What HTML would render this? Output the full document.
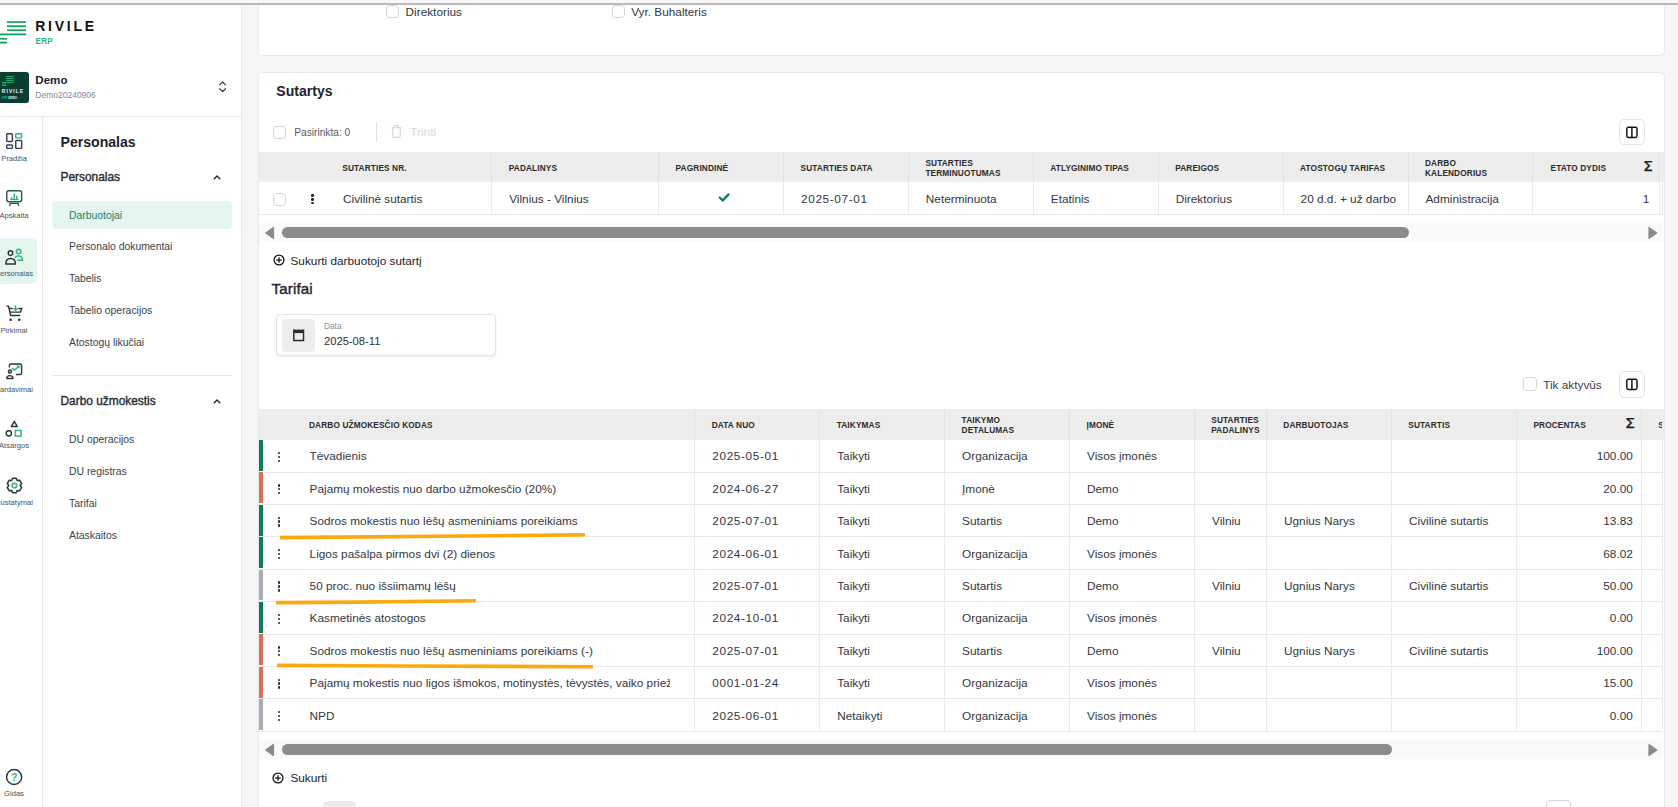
<!DOCTYPE html>
<html lang="lt">
<head>
<meta charset="utf-8">
<title>Rivile ERP</title>
<style>
*{box-sizing:border-box;margin:0;padding:0}
html,body{width:1678px;height:807px;overflow:hidden}
body{position:relative;background:#f5f5f7;font-family:"Liberation Sans",sans-serif;color:#2f333c;font-size:11.8px}
.abs{position:absolute}
#topstrip{left:0;top:0;width:1678px;height:3px;background:#f7f7f7;z-index:50}
#topline{left:0;top:3px;width:1678px;height:2px;background:#bababa;z-index:50}
#side{left:0;top:0;width:241px;height:807px;background:#fff}
#sideborder{left:241px;top:5px;width:1px;height:802px;background:#e7e7ea}
#railborder{left:42px;top:116px;width:1px;height:691px;background:#e5e6e9}
#hdiv{left:0;top:116px;width:241px;height:1px;background:#e5e6e9}
.rv{font-weight:700;color:#111;font-size:14px;letter-spacing:2.75px;left:35.2px;top:18.4px;line-height:16px}
.erp{font-weight:700;color:#3db27c;font-size:8.2px;left:35.6px;top:36.6px;line-height:10px;letter-spacing:.2px}
.railitem{left:0;width:28px;text-align:center;font-size:7.6px;color:#4a5160;white-space:nowrap;line-height:9px}
.railitem span{position:absolute;left:50%;transform:translateX(-50%)}
.mi{left:69px;font-size:10.4px;color:#3a3f4a;line-height:12px;white-space:nowrap}
.sec{left:60.5px;font-size:11.9px;font-weight:400;-webkit-text-stroke:.4px #2a2e38;color:#2a2e38;line-height:13px;white-space:nowrap}
.card{background:#fff;border:1px solid #e9e9ec;border-radius:5px}
.th{position:absolute;font-size:8.27px;font-weight:700;letter-spacing:.13px;color:#2b2b2b;line-height:10px;white-space:nowrap}
.td{position:absolute;white-space:nowrap;line-height:14px;font-size:11.8px;color:#333742}
.vl{position:absolute;width:1px;background:#ebebeb}
.hl{position:absolute;height:1px;background:#e8e8e8}
.cb{position:absolute;width:13.4px;height:13.4px;border:1px solid #d4d4d7;border-radius:3.5px;background:#fff}
.dots{position:absolute;width:4px}
.dots i{display:block;width:2.4px;height:2.4px;border-radius:1.2px;background:#262626;margin:0 0 1.5px .8px}
.d{letter-spacing:.63px}
.sig{font-family:"DejaVu Sans","Liberation Sans",sans-serif;font-size:13.6px;line-height:16px;color:#1a1a1a;transform:scaleX(1.17);transform-origin:0 0;-webkit-text-stroke:.25px #1a1a1a}
</style>
</head>
<body>
<!-- SIDEBAR -->
<div id="side" class="abs"></div>
<div id="sideborder" class="abs"></div>
<div id="railborder" class="abs"></div>
<div id="hdiv" class="abs"></div>

<!-- logo -->
<svg class="abs" style="left:0;top:18px" width="30" height="28" viewBox="0 0 30 28">
 <g fill="#12a05c">
  <rect x="7" y="3.2" width="19" height="1.7"/>
  <rect x="7" y="7.3" width="19" height="1.7"/>
  <rect x="7" y="11.4" width="19" height="1.7"/>
  <rect x="0" y="15.5" width="26" height="1.8"/>
  <rect x="0" y="19.9" width="7" height="1.7"/>
  <rect x="0" y="23.7" width="7" height="1.8"/>
 </g>
</svg>
<div class="abs rv">RIVILE</div>
<div class="abs erp">ERP</div>

<!-- company -->
<div class="abs" style="left:-4px;top:72px;width:33px;height:31px;background:#0b3d33;border-radius:3px;box-shadow:0 0 2px rgba(0,0,0,.15)"></div>
<svg class="abs" style="left:0;top:72px" width="29" height="31" viewBox="0 0 29 31">
 <g fill="#16a567">
  <rect x="6" y="4" width="7.8" height="1.1"/>
  <rect x="6" y="6" width="7.8" height="1.1"/>
  <rect x="6" y="8" width="7.8" height="1.1"/>
  <rect x="2" y="10" width="11.8" height="1.1"/>
  <rect x="2" y="11.6" width="4" height="1"/>
  <rect x="2" y="13" width="4" height="1"/>
 </g>
 <text x="1.8" y="21" font-family="Liberation Sans, sans-serif" font-weight="700" font-size="5" letter-spacing="1.05" fill="#f2f4f3">RIVILE</text>
 <text x="1.8" y="26.7" font-family="Liberation Sans, sans-serif" font-weight="700" font-size="2.9" fill="#1fb574">ERP<tspan fill="#e8efec" dx=".4">DEMO</tspan></text>
</svg>
<div class="abs" style="left:35.3px;top:72.5px;font-size:11.6px;font-weight:700;color:#1e2230;line-height:14px">Demo</div>
<div class="abs" style="left:35.3px;top:90px;font-size:8.5px;color:#7d8aa0;line-height:10px">Demo20240906</div>
<svg class="abs" style="left:218px;top:80px" width="10" height="14" viewBox="0 0 10 14" fill="none" stroke="#3a3a3e" stroke-width="1.3">
 <path d="M1.4 5.1 L4.6 2.1 L7.8 5.1"/><path d="M1.4 8.5 L4.6 11.5 L7.8 8.5"/>
</svg>

<!-- rail -->
<div class="abs" style="left:-4px;top:238px;width:41px;height:46px;background:#e5f6ef;border-radius:5px"></div>

<!-- Pradzia -->
<svg class="abs" style="left:5.9px;top:132.8px" width="17" height="17" viewBox="0 0 17 17" fill="none" stroke-width="1.45">
 <rect x=".75" y=".75" width="5.6" height="7.8" rx=".7" stroke="#3c4150"/>
 <rect x="9.75" y=".75" width="5.9" height="4.1" rx=".7" stroke="#2eb67d"/>
 <rect x=".75" y="11.95" width="5.6" height="3.4" rx=".7" stroke="#3c4150"/>
 <rect x="9.75" y="7.55" width="5.9" height="7.8" rx=".7" stroke="#3c4150"/>
</svg>
<div class="abs railitem" style="top:153.6px"><span>Pradžia</span></div>

<!-- Apskaita -->
<svg class="abs" style="left:5.9px;top:189.8px" width="17" height="17" viewBox="0 0 17 17" fill="none" stroke-width="1.45">
 <rect x=".75" y=".75" width="14.9" height="10.9" rx="2.2" stroke="#2f5a50"/>
 <path d="M3.5 13.4 H12.9 M4.6 13.4 L3.5 16 M11.8 13.4 L12.9 16" stroke="#2f5a50" stroke-width="1.3"/>
 <path d="M5.8 9.3 V7.2 M8.3 9.3 V3.4 M10.8 9.3 V5.8" stroke="#2eb67d" stroke-width="1.5"/>
 <path d="M4 9.5 H12.6" stroke="#2eb67d" stroke-width="1.2"/>
</svg>
<div class="abs railitem" style="top:211px"><span>Apskaita</span></div>

<!-- Personalas -->
<svg class="abs" style="left:5px;top:247.5px" width="19" height="18" viewBox="0 0 19 18" fill="none" stroke-width="1.45">
 <circle cx="13.6" cy="3.4" r="2.25" stroke="#2eb67d"/>
 <path d="M9.8 9.7 C10.6 8.6 11.9 7.9 13.5 7.9 C16 7.9 17.4 9.6 17.4 12.3 H12.2" stroke="#2eb67d"/>
 <circle cx="5.5" cy="5.1" r="2.3" stroke="#2f3440"/>
 <path d="M.8 16 C.8 12.6 2.7 10.4 5.6 10.4 C8.5 10.4 10.4 12.6 10.4 16 Z" stroke="#2f3440" stroke-linejoin="round"/>
</svg>
<div class="abs railitem" style="top:269px"><span>Personalas</span></div>

<!-- Pirkimai -->
<svg class="abs" style="left:6px;top:304.5px" width="17" height="17" viewBox="0 0 17 17" fill="none" stroke-width="1.45">
 <path d="M.3 1.1 H2.5 L4.7 10.5 H14.2" stroke="#2f3440"/>
 <path d="M3.2 3.5 H6.6 M12.3 3.5 H15.7 L14.5 7.1 H4" stroke="#2f3440"/>
 <circle cx="4.7" cy="14.8" r="1.3" fill="#2f3440" stroke="none"/>
 <circle cx="13.2" cy="14.8" r="1.3" fill="#2f3440" stroke="none"/>
 <path d="M9.5 .2 V5 M7.4 3.2 L9.5 5.3 L11.6 3.2" stroke="#2eb67d" stroke-width="1.5"/>
</svg>
<div class="abs railitem" style="top:325.5px"><span>Pirkimai</span></div>

<!-- Pardavimai -->
<svg class="abs" style="left:6px;top:362.5px" width="17" height="17" viewBox="0 0 17 17" fill="none" stroke-width="1.45">
 <path d="M3.4 4.4 V2.5 C3.4 1.6 4.1.9 5 .9 H14 C14.9.9 15.6 1.6 15.6 2.5 V9.9 C15.6 10.8 14.9 11.5 14 11.5 H10" stroke="#2f3440"/>
 <circle cx="3.9" cy="8.4" r="1.5" stroke="#2f3440"/>
 <path d="M.8 15.4 C.8 13.6 2 12.6 3.9 12.6 C5.8 12.6 7 13.6 7 15.4 Z" stroke="#2f3440" stroke-linejoin="round"/>
 <path d="M6 5 L8.3 7.3 L12.2 3.9" stroke="#2eb67d" stroke-width="1.5"/>
 <path d="M10.2 2.6 H13.6 V6 Z" fill="#2eb67d" stroke="none"/>
</svg>
<div class="abs railitem" style="top:384.5px"><span>Pardavimai</span></div>

<!-- Atsargos -->
<svg class="abs" style="left:5px;top:419.5px" width="18" height="18" viewBox="0 0 18 18" fill="none" stroke-width="1.45">
 <path d="M9.3 1.4 L12.2 6.4 H6.4 Z" stroke="#2f3440" stroke-linejoin="round"/>
 <circle cx="3.8" cy="13.3" r="2.65" stroke="#2f3440"/>
 <rect x="10.3" y="10.5" width="5.8" height="5.6" stroke="#2eb67d"/>
</svg>
<div class="abs railitem" style="top:441px"><span>Atsargos</span></div>

<!-- Nustatymai -->
<svg class="abs" style="left:5.5px;top:477.4px" width="17" height="17" viewBox="0 0 17 17" fill="none" stroke-width="1.5">
 <path d="M6.66 1.32 L10.24 1.32 L11.30 3.56 L13.77 3.36 L15.56 6.46 L14.15 8.50 L15.56 10.54 L13.77 13.64 L11.30 13.44 L10.24 15.68 L6.66 15.68 L5.60 13.44 L3.13 13.64 L1.34 10.54 L2.75 8.50 L1.34 6.46 L3.13 3.36 L5.60 3.56 Z" stroke="#2f3440" stroke-linejoin="round"/>
 <circle cx="8.45" cy="8.5" r="2.3" stroke="#2eb67d" stroke-width="1.6"/>
</svg>
<div class="abs railitem" style="top:498.2px"><span>Nustatymai</span></div>

<!-- Gidas -->
<svg class="abs" style="left:5px;top:768px" width="18" height="18" viewBox="0 0 18 18" fill="none">
 <circle cx="9.1" cy="9" r="7.55" stroke="#2f3440" stroke-width="1.5"/>
 <text x="9.2" y="12.7" text-anchor="middle" font-family="Liberation Sans, sans-serif" font-weight="700" font-size="10.4" fill="#2eb67d">?</text>
</svg>
<div class="abs railitem" style="top:788.5px"><span>Gidas</span></div>

<!-- side panel -->
<div class="abs" style="left:60.5px;top:134.2px;font-size:14.1px;font-weight:700;color:#1e222d;line-height:17px">Personalas</div>
<div class="abs sec" style="top:170.6px">Personalas</div>
<svg class="abs" style="left:212px;top:172px" width="10" height="10" viewBox="0 0 10 10" fill="none" stroke="#2b2b2b" stroke-width="1.4"><path d="M1.9 7.2 L5.1 4 L8.3 7.2"/></svg>
<div class="abs" style="left:52px;top:201px;width:180px;height:28px;background:#e4f6ef;border-radius:4px"></div>
<div class="abs mi" style="top:210.3px;color:#1d7a68">Darbuotojai</div>
<div class="abs mi" style="top:241.3px">Personalo dokumentai</div>
<div class="abs mi" style="top:273.3px">Tabelis</div>
<div class="abs mi" style="top:305.3px">Tabelio operacijos</div>
<div class="abs mi" style="top:337.3px">Atostogų likučiai</div>
<div class="abs" style="left:52px;top:375px;width:180px;height:1px;background:#e5e6e9"></div>
<div class="abs sec" style="top:394.6px">Darbo užmokestis</div>
<svg class="abs" style="left:212px;top:396px" width="10" height="10" viewBox="0 0 10 10" fill="none" stroke="#2b2b2b" stroke-width="1.4"><path d="M1.9 7.2 L5.1 4 L8.3 7.2"/></svg>
<div class="abs mi" style="top:433.8px">DU operacijos</div>
<div class="abs mi" style="top:465.8px">DU registras</div>
<div class="abs mi" style="top:497.8px">Tarifai</div>
<div class="abs mi" style="top:529.8px">Ataskaitos</div>

<!-- MAIN -->
<div id="main">
<div class="abs card" style="left:258px;top:-10px;width:1407px;height:66px"></div>
<div class="abs card" style="left:258px;top:72px;width:1407px;height:760px"></div>
<div class="cb" style="left:386px;top:5px;width:12.6px;height:12.6px"></div>
<div class="td" style="left:405.6px;top:4.6px">Direktorius</div>
<div class="cb" style="left:612px;top:5px;width:12.6px;height:12.6px"></div>
<div class="td" style="left:631.2px;top:4.6px">Vyr. Buhalteris</div>
<div class="abs" style="left:276.3px;top:82.7px;font-size:14.1px;font-weight:700;color:#1e222d;line-height:17px">Sutartys</div>
<div class="cb" style="left:273px;top:126px"></div>
<div class="abs" style="left:294.2px;top:127px;font-size:10.2px;color:#565c68;line-height:12px">Pasirinkta: 0</div>
<div class="abs" style="left:376px;top:122px;width:1px;height:20px;background:#e1e3e8"></div>
<svg class="abs" style="left:391px;top:125px" width="11" height="13" viewBox="0 0 11 13" fill="none" stroke="#d2d5dc" stroke-width="1.1"><path d="M.6 2.8 H10.4 M3.6 2.6 V1.3 C3.6 .9 3.9 .6 4.3 .6 H6.7 C7.1 .6 7.4 .9 7.4 1.3 V2.6 M1.8 3 V11 C1.8 11.8 2.4 12.4 3.2 12.4 H7.8 C8.6 12.4 9.2 11.8 9.2 11 V3"/></svg>
<div class="abs" style="left:410.3px;top:124.5px;font-size:11.8px;color:#d6d8e0;line-height:14px">Trinti</div>
<div class="abs" style="left:1619.1px;top:119.1px;width:25.7px;height:25.7px;border:1px solid #dde4f0;border-radius:5px;background:#fff"></div>
<svg class="abs" style="left:1625.6999999999998px;top:125.85px" width="13" height="13" viewBox="0 0 13 13" fill="none" stroke="#111" stroke-width="1.45"><rect x=".8" y="1.2" width="10.2" height="10.2" rx="1.6"/><path d="M5.9 1.2 V11.4"/></svg>
<div class="abs" style="left:259px;top:152px;width:1405px;height:30px;background:#ededed"></div>
<div class="vl" style="left:491.3px;top:152px;height:30px;background:#e2e2e2"></div>
<div class="vl" style="left:491.3px;top:182px;height:32px"></div>
<div class="vl" style="left:658.3px;top:152px;height:30px;background:#e2e2e2"></div>
<div class="vl" style="left:658.3px;top:182px;height:32px"></div>
<div class="vl" style="left:783.2px;top:152px;height:30px;background:#e2e2e2"></div>
<div class="vl" style="left:783.2px;top:182px;height:32px"></div>
<div class="vl" style="left:908px;top:152px;height:30px;background:#e2e2e2"></div>
<div class="vl" style="left:908px;top:182px;height:32px"></div>
<div class="vl" style="left:1032.8px;top:152px;height:30px;background:#e2e2e2"></div>
<div class="vl" style="left:1032.8px;top:182px;height:32px"></div>
<div class="vl" style="left:1157.7px;top:152px;height:30px;background:#e2e2e2"></div>
<div class="vl" style="left:1157.7px;top:182px;height:32px"></div>
<div class="vl" style="left:1282.6px;top:152px;height:30px;background:#e2e2e2"></div>
<div class="vl" style="left:1282.6px;top:182px;height:32px"></div>
<div class="vl" style="left:1407.5px;top:152px;height:30px;background:#e2e2e2"></div>
<div class="vl" style="left:1407.5px;top:182px;height:32px"></div>
<div class="vl" style="left:1532.4px;top:152px;height:30px;background:#e2e2e2"></div>
<div class="vl" style="left:1532.4px;top:182px;height:32px"></div>
<div class="vl" style="left:1658.6px;top:152px;height:30px;background:#e2e2e2"></div>
<div class="vl" style="left:1658.6px;top:182px;height:32px"></div>
<div class="vl" style="left:1662px;top:182px;height:32px"></div>
<div class="hl" style="left:259px;top:213.6px;width:1404px"></div>
<div class="th" style="left:342.3px;top:164.1px">SUTARTIES NR.</div>
<div class="th" style="left:508.8px;top:164.1px">PADALINYS</div>
<div class="th" style="left:675.6px;top:164.1px">PAGRINDINĖ</div>
<div class="th" style="left:800.5px;top:164.1px">SUTARTIES DATA</div>
<div class="th" style="left:925.4px;top:159.3px">SUTARTIES<br>TERMINUOTUMAS</div>
<div class="th" style="left:1050.3px;top:164.1px">ATLYGINIMO TIPAS</div>
<div class="th" style="left:1175.2px;top:164.1px">PAREIGOS</div>
<div class="th" style="left:1300.1px;top:164.1px">ATOSTOGŲ TARIFAS</div>
<div class="th" style="left:1425px;top:159.3px">DARBO<br>KALENDORIUS</div>
<div class="th" style="left:1550.5px;top:164.1px">ETATO DYDIS</div>
<div class="abs sig" style="left:1643.2px;top:158.2px">Σ</div>
<div class="cb" style="left:273px;top:192.5px"></div>
<div class="dots" style="left:310.7px;top:194.3px"><i></i><i></i><i></i></div>
<div class="td" style="left:343px;top:192.2px">Civilinė sutartis</div>
<div class="td" style="left:509.2px;top:192.2px">Vilnius - Vilnius</div>
<div class="td" style="left:801px;top:192.2px"><span class="d">2025-07-01</span></div>
<div class="td" style="left:925.8px;top:192.2px">Neterminuota</div>
<div class="td" style="left:1050.8px;top:192.2px">Etatinis</div>
<div class="td" style="left:1175.7px;top:192.2px">Direktorius</div>
<div class="td" style="left:1300.6px;top:192.2px">20 d.d. + už darbo</div>
<div class="td" style="left:1425.5px;top:192.2px">Administracija</div>
<div class="td" style="left:1600px;width:49.4px;text-align:right;top:192.2px">1</div>
<svg class="abs" style="left:717.5px;top:191.9px" width="13" height="10" viewBox="0 0 13 10" fill="none" stroke="#0d7d5b" stroke-width="2.3"><path d="M1 5 L4.7 8.4 L11.1 1.9"/></svg>
<div class="abs" style="left:259px;top:222.8px;width:1404px;height:19px;background:#fafafa"></div>
<div class="abs" style="left:281.9px;top:226.90px;width:1127.1px;height:11px;border-radius:5.5px;background:#8b8b8b"></div>
<svg class="abs" style="left:264.9px;top:226.95px" width="10" height="13" viewBox="0 0 10 13"><path d="M8.5 .6 V11.5 L.7 6.05 Z" fill="#8b8b8b" stroke="#8b8b8b" stroke-width="1.2" stroke-linejoin="round"/></svg>
<svg class="abs" style="left:1647.8px;top:226.95px" width="10" height="13" viewBox="0 0 10 13"><path d="M1 .6 V11.5 L8.8 6.05 Z" fill="#8b8b8b" stroke="#8b8b8b" stroke-width="1.2" stroke-linejoin="round"/></svg>
<svg class="abs" style="left:272.5px;top:254.4px" width="12" height="12" viewBox="0 0 12 12" fill="none" stroke="#111" stroke-width="1.25"><circle cx="6" cy="6" r="4.95"/><path d="M6 3.3 V8.7 M3.3 6 H8.7" stroke-width="1.25"/></svg>
<div class="td" style="left:290.5px;top:253.70px;color:#22252c">Sukurti darbuotojo sutartį</div>
<div class="abs" style="left:271.6px;top:280.2px;font-size:15.2px;font-weight:400;-webkit-text-stroke:.38px #23262e;color:#23262e;line-height:17px;letter-spacing:.1px">Tarifai</div>
<div class="abs" style="left:276px;top:314px;width:220px;height:41.5px;border:1px solid #e4e4e6;border-radius:4px;background:#fff;box-shadow:0 1px 2px rgba(0,0,0,.08)"></div>
<div class="abs" style="left:282px;top:319px;width:33px;height:33px;border-radius:4px;background:#ededed"></div>
<svg class="abs" style="left:292.8px;top:328.8px" width="12" height="13" viewBox="0 0 12 13" fill="none" stroke="#2e2e2e"><rect x=".8" y="1.3" width="9.7" height="10.2" stroke-width="1.5"/><path d="M.8 2.5 H10.5" stroke-width="3.2"/><path d="M3.9 .2 V1.1 M7.4 .2 V1.1" stroke="#ededed" stroke-width=".7"/></svg>
<div class="abs" style="left:324px;top:321.2px;font-size:8.3px;color:#8b909b;line-height:10px">Data</div>
<div class="abs" style="left:324px;top:333.6px;font-size:11.2px;color:#2c3038;line-height:14px">2025-08-11</div>
<div class="cb" style="left:1523.4px;top:377.2px;width:13.4px;height:13.4px"></div>
<div class="td" style="left:1543.2px;top:378px;color:#3a3f4a">Tik aktyvūs</div>
<div class="abs" style="left:1619.1px;top:371.1px;width:25.7px;height:26.8px;border:1px solid #dde4f0;border-radius:5px;background:#fff"></div>
<svg class="abs" style="left:1625.6999999999998px;top:378.40px" width="13" height="13" viewBox="0 0 13 13" fill="none" stroke="#111" stroke-width="1.45"><rect x=".8" y="1.2" width="10.2" height="10.2" rx="1.6"/><path d="M5.9 1.2 V11.4"/></svg>
<div class="abs" style="left:259px;top:409.3px;width:1405px;height:30.399999999999977px;background:#ededed"></div>
<div class="vl" style="left:694.4px;top:409.3px;height:30.399999999999977px;background:#e2e2e2"></div>
<div class="vl" style="left:694.4px;top:439.7px;height:291.59999999999997px"></div>
<div class="vl" style="left:819.3px;top:409.3px;height:30.399999999999977px;background:#e2e2e2"></div>
<div class="vl" style="left:819.3px;top:439.7px;height:291.59999999999997px"></div>
<div class="vl" style="left:944.2px;top:409.3px;height:30.399999999999977px;background:#e2e2e2"></div>
<div class="vl" style="left:944.2px;top:439.7px;height:291.59999999999997px"></div>
<div class="vl" style="left:1069.1px;top:409.3px;height:30.399999999999977px;background:#e2e2e2"></div>
<div class="vl" style="left:1069.1px;top:439.7px;height:291.59999999999997px"></div>
<div class="vl" style="left:1194.1px;top:409.3px;height:30.399999999999977px;background:#e2e2e2"></div>
<div class="vl" style="left:1194.1px;top:439.7px;height:291.59999999999997px"></div>
<div class="vl" style="left:1266px;top:409.3px;height:30.399999999999977px;background:#e2e2e2"></div>
<div class="vl" style="left:1266px;top:439.7px;height:291.59999999999997px"></div>
<div class="vl" style="left:1391px;top:409.3px;height:30.399999999999977px;background:#e2e2e2"></div>
<div class="vl" style="left:1391px;top:439.7px;height:291.59999999999997px"></div>
<div class="vl" style="left:1516px;top:409.3px;height:30.399999999999977px;background:#e2e2e2"></div>
<div class="vl" style="left:1516px;top:439.7px;height:291.59999999999997px"></div>
<div class="vl" style="left:1641px;top:409.3px;height:30.399999999999977px;background:#e2e2e2"></div>
<div class="vl" style="left:1641px;top:439.7px;height:291.59999999999997px"></div>
<div class="vl" style="left:1662px;top:439.7px;height:291.59999999999997px"></div>
<div class="th" style="left:309px;top:420.7px">DARBO UŽMOKESČIO KODAS</div>
<div class="th" style="left:711.7px;top:420.7px">DATA NUO</div>
<div class="th" style="left:836.7px;top:420.7px">TAIKYMAS</div>
<div class="th" style="left:961.6px;top:415.90000000000003px">TAIKYMO<br>DETALUMAS</div>
<div class="th" style="left:1086.5px;top:420.7px">ĮMONĖ</div>
<div class="th" style="left:1211.3px;top:415.90000000000003px">SUTARTIES<br>PADALINYS</div>
<div class="th" style="left:1283.3px;top:420.7px">DARBUOTOJAS</div>
<div class="th" style="left:1408.3px;top:420.7px">SUTARTIS</div>
<div class="th" style="left:1533.4px;top:420.7px">PROCENTAS</div>
<div class="abs sig" style="left:1625.2px;top:414.7px">Σ</div>
<div class="th" style="left:1658.3px;top:420.7px;width:4px;overflow:hidden">S</div>
<div class="abs" style="left:259px;top:440.0px;width:4px;height:30.9px;background:#0a7d5a"></div>
<div class="hl" style="left:259px;top:471.6px;width:1404px"></div>
<div class="dots" style="left:277.3px;top:451.8px"><i></i><i></i><i></i></div>
<div class="td" style="left:309.6px;top:449.3px">Tėvadienis</div>
<div class="td" style="left:712.3px;top:449.3px"><span class="d">2025-05-01</span></div>
<div class="td" style="left:837.2px;top:449.3px">Taikyti</div>
<div class="td" style="left:962.1px;top:449.3px">Organizacija</div>
<div class="td" style="left:1087px;top:449.3px">Visos įmonės</div>
<div class="td" style="left:1560px;width:72.8px;text-align:right;top:449.3px">100.00</div>
<div class="abs" style="left:259px;top:472.4px;width:4px;height:30.9px;background:#de6e56"></div>
<div class="hl" style="left:259px;top:504.0px;width:1404px"></div>
<div class="dots" style="left:277.3px;top:484.2px"><i></i><i></i><i></i></div>
<div class="td" style="left:309.6px;top:481.7px">Pajamų mokestis nuo darbo užmokesčio (20%)</div>
<div class="td" style="left:712.3px;top:481.7px"><span class="d">2024-06-27</span></div>
<div class="td" style="left:837.2px;top:481.7px">Taikyti</div>
<div class="td" style="left:962.1px;top:481.7px">Įmonė</div>
<div class="td" style="left:1087px;top:481.7px">Demo</div>
<div class="td" style="left:1560px;width:72.8px;text-align:right;top:481.7px">20.00</div>
<div class="abs" style="left:259px;top:504.8px;width:4px;height:30.9px;background:#0a7d5a"></div>
<div class="hl" style="left:259px;top:536.4px;width:1404px"></div>
<div class="dots" style="left:277.3px;top:516.6px"><i></i><i></i><i></i></div>
<div class="td" style="left:309.6px;top:514.1px">Sodros mokestis nuo lėšų asmeniniams poreikiams</div>
<div class="td" style="left:712.3px;top:514.1px"><span class="d">2025-07-01</span></div>
<div class="td" style="left:837.2px;top:514.1px">Taikyti</div>
<div class="td" style="left:962.1px;top:514.1px">Sutartis</div>
<div class="td" style="left:1087px;top:514.1px">Demo</div>
<div class="td" style="left:1212px;top:514.1px">Vilniu</div>
<div class="td" style="left:1284px;top:514.1px">Ugnius Narys</div>
<div class="td" style="left:1409px;top:514.1px">Civilinė sutartis</div>
<div class="td" style="left:1560px;width:72.8px;text-align:right;top:514.1px">13.83</div>
<div class="abs" style="left:259px;top:537.2px;width:4px;height:30.9px;background:#0a7d5a"></div>
<div class="hl" style="left:259px;top:568.8px;width:1404px"></div>
<div class="dots" style="left:277.3px;top:549.0px"><i></i><i></i><i></i></div>
<div class="td" style="left:309.6px;top:546.5px">Ligos pašalpa pirmos dvi (2) dienos</div>
<div class="td" style="left:712.3px;top:546.5px"><span class="d">2024-06-01</span></div>
<div class="td" style="left:837.2px;top:546.5px">Taikyti</div>
<div class="td" style="left:962.1px;top:546.5px">Organizacija</div>
<div class="td" style="left:1087px;top:546.5px">Visos įmonės</div>
<div class="td" style="left:1560px;width:72.8px;text-align:right;top:546.5px">68.02</div>
<div class="abs" style="left:259px;top:569.6px;width:4px;height:30.9px;background:#a7abb3"></div>
<div class="hl" style="left:259px;top:601.2px;width:1404px"></div>
<div class="dots" style="left:277.3px;top:581.4px"><i></i><i></i><i></i></div>
<div class="td" style="left:309.6px;top:578.9px">50 proc. nuo išsiimamų lėšų</div>
<div class="td" style="left:712.3px;top:578.9px"><span class="d">2025-07-01</span></div>
<div class="td" style="left:837.2px;top:578.9px">Taikyti</div>
<div class="td" style="left:962.1px;top:578.9px">Sutartis</div>
<div class="td" style="left:1087px;top:578.9px">Demo</div>
<div class="td" style="left:1212px;top:578.9px">Vilniu</div>
<div class="td" style="left:1284px;top:578.9px">Ugnius Narys</div>
<div class="td" style="left:1409px;top:578.9px">Civilinė sutartis</div>
<div class="td" style="left:1560px;width:72.8px;text-align:right;top:578.9px">50.00</div>
<div class="abs" style="left:259px;top:602.0px;width:4px;height:30.9px;background:#0a7d5a"></div>
<div class="hl" style="left:259px;top:633.6px;width:1404px"></div>
<div class="dots" style="left:277.3px;top:613.8px"><i></i><i></i><i></i></div>
<div class="td" style="left:309.6px;top:611.3px">Kasmetinės atostogos</div>
<div class="td" style="left:712.3px;top:611.3px"><span class="d">2024-10-01</span></div>
<div class="td" style="left:837.2px;top:611.3px">Taikyti</div>
<div class="td" style="left:962.1px;top:611.3px">Organizacija</div>
<div class="td" style="left:1087px;top:611.3px">Visos įmonės</div>
<div class="td" style="left:1560px;width:72.8px;text-align:right;top:611.3px">0.00</div>
<div class="abs" style="left:259px;top:634.4px;width:4px;height:30.9px;background:#de6e56"></div>
<div class="hl" style="left:259px;top:666.0px;width:1404px"></div>
<div class="dots" style="left:277.3px;top:646.2px"><i></i><i></i><i></i></div>
<div class="td" style="left:309.6px;top:643.7px">Sodros mokestis nuo lėšų asmeniniams poreikiams (-)</div>
<div class="td" style="left:712.3px;top:643.7px"><span class="d">2025-07-01</span></div>
<div class="td" style="left:837.2px;top:643.7px">Taikyti</div>
<div class="td" style="left:962.1px;top:643.7px">Sutartis</div>
<div class="td" style="left:1087px;top:643.7px">Demo</div>
<div class="td" style="left:1212px;top:643.7px">Vilniu</div>
<div class="td" style="left:1284px;top:643.7px">Ugnius Narys</div>
<div class="td" style="left:1409px;top:643.7px">Civilinė sutartis</div>
<div class="td" style="left:1560px;width:72.8px;text-align:right;top:643.7px">100.00</div>
<div class="abs" style="left:259px;top:666.8px;width:4px;height:30.9px;background:#de6e56"></div>
<div class="hl" style="left:259px;top:698.4px;width:1404px"></div>
<div class="dots" style="left:277.3px;top:678.6px"><i></i><i></i><i></i></div>
<div class="td" style="left:309.6px;top:676.1px;width:360.5px;overflow:hidden">Pajamų mokestis nuo ligos išmokos, motinystės, tėvystės, vaiko priežiūros</div>
<div class="td" style="left:712.3px;top:676.1px"><span class="d">0001-01-24</span></div>
<div class="td" style="left:837.2px;top:676.1px">Taikyti</div>
<div class="td" style="left:962.1px;top:676.1px">Organizacija</div>
<div class="td" style="left:1087px;top:676.1px">Visos įmonės</div>
<div class="td" style="left:1560px;width:72.8px;text-align:right;top:676.1px">15.00</div>
<div class="abs" style="left:259px;top:699.2px;width:4px;height:30.9px;background:#a7abb3"></div>
<div class="hl" style="left:259px;top:730.8px;width:1404px"></div>
<div class="dots" style="left:277.3px;top:711.0px"><i></i><i></i><i></i></div>
<div class="td" style="left:309.6px;top:708.5px">NPD</div>
<div class="td" style="left:712.3px;top:708.5px"><span class="d">2025-06-01</span></div>
<div class="td" style="left:837.2px;top:708.5px">Netaikyti</div>
<div class="td" style="left:962.1px;top:708.5px">Organizacija</div>
<div class="td" style="left:1087px;top:708.5px">Visos įmonės</div>
<div class="td" style="left:1560px;width:72.8px;text-align:right;top:708.5px">0.00</div>
<div class="abs" style="left:259px;top:739.8px;width:1404px;height:19px;background:#fafafa"></div>
<div class="abs" style="left:281.9px;top:743.90px;width:1110.1px;height:11px;border-radius:5.5px;background:#8b8b8b"></div>
<svg class="abs" style="left:264.9px;top:743.95px" width="10" height="13" viewBox="0 0 10 13"><path d="M8.5 .6 V11.5 L.7 6.05 Z" fill="#8b8b8b" stroke="#8b8b8b" stroke-width="1.2" stroke-linejoin="round"/></svg>
<svg class="abs" style="left:1647.8px;top:743.95px" width="10" height="13" viewBox="0 0 10 13"><path d="M1 .6 V11.5 L8.8 6.05 Z" fill="#8b8b8b" stroke="#8b8b8b" stroke-width="1.2" stroke-linejoin="round"/></svg>
<svg class="abs" style="left:272.4px;top:771.55px" width="12" height="12" viewBox="0 0 12 12" fill="none" stroke="#111" stroke-width="1.25"><circle cx="6" cy="6" r="4.95"/><path d="M6 3.3 V8.7 M3.3 6 H8.7" stroke-width="1.25"/></svg>
<div class="td" style="left:290.4px;top:770.85px;color:#22252c">Sukurti</div>
<svg class="abs" style="left:0;top:0;pointer-events:none" width="1678" height="807" viewBox="0 0 1678 807" fill="none" stroke="#fba90f" stroke-width="3.6" stroke-linecap="butt">
<path d="M280 537.6 C360 536.8 480 536 585 534.8"/>
<path d="M276 602.6 C340 602.4 420 601.6 476 600.8"/>
<path d="M277 665.4 C380 665.8 500 666.4 593 666.8"/>
</svg>
<div class="abs" style="left:323px;top:800.5px;width:33px;height:20px;border-radius:4px;background:#ececec"></div>
<div class="abs" style="left:1546px;top:800px;width:25px;height:20px;border-radius:4px;background:#fff;border:1px solid #d6d6d8"></div>
</div><!--endmain-->

<div id="topstrip" class="abs"></div>
<div id="topline" class="abs"></div>
</body>
</html>
